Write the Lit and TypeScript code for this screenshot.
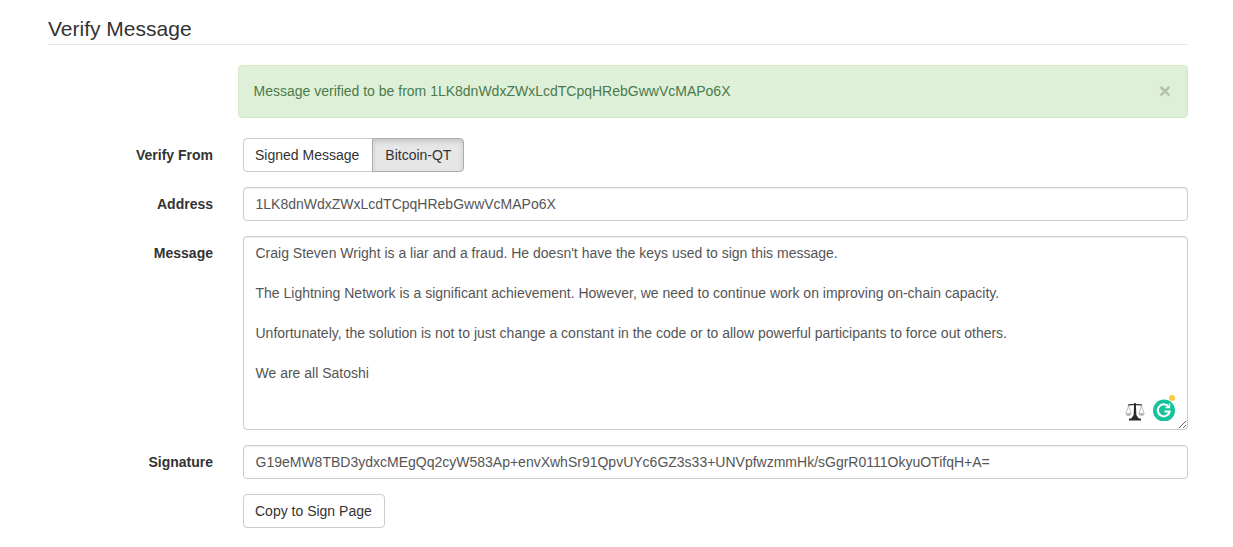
import { LitElement, html, css } from "lit";
import { customElement } from "lit/decorators.js";

const MESSAGE = `Craig Steven Wright is a liar and a fraud. He doesn't have the keys used to sign this message.

The Lightning Network is a significant achievement. However, we need to continue work on improving on-chain capacity.

Unfortunately, the solution is not to just change a constant in the code or to allow powerful participants to force out others.

We are all Satoshi`;

@customElement("app-root")
export class AppRoot extends LitElement {
  static styles = css`
    :host {
      display: block;
      width: 1233px;
      height: 547px;
      overflow: hidden;
      background: #fff;
      box-sizing: border-box;
      padding: 0 45px 0 48px;
      font-family: "Liberation Sans", Arial, sans-serif;
      font-size: 14px;
      line-height: 20px;
      color: #333;
    }
    * { box-sizing: border-box; }
    h1 {
      margin: 0 0 20px;
      height: 45px;
      padding-top: 17px;
      border-bottom: 1px solid #e5e5e5;
      font-size: 21px;
      font-weight: 400;
      line-height: 24px;
      color: #333;
    }
    .alert {
      margin: 0 0 20px 190px;
      height: 53px;
      padding: 15px 15px 15px 14.5px;
      display: flex;
      justify-content: space-between;
      background: #dff0d8;
      border: 1px solid #d6e9c6;
      border-radius: 4px;
      color: #4a7a4b;
    }
    .close {
      font-size: 21px;
      font-weight: 700;
      line-height: 20px;
      color: #000;
      opacity: 0.2;
      margin-right: 1px;
    }
    .row {
      display: grid;
      grid-template-columns: 165px 1fr;
      column-gap: 30px;
      margin-bottom: 15px;
    }
    label {
      text-align: right;
      font-weight: 700;
      padding-top: 7px;
      color: #333;
    }
    .group { display: flex; }
    .btn {
      height: 34px;
      padding: 6px 12px 6px 11px;
      border: 1px solid #ccc;
      border-radius: 4px;
      background: #fff;
      color: #333;
      font: inherit;
      white-space: nowrap;
    }
    .group .btn:first-child {
      border-radius: 4px 0 0 4px;
      padding-right: 13px;
    }
    .group .btn:last-child {
      border-radius: 0 4px 4px 0;
      margin-left: -1px;
      padding-left: 12px;
      background: #e6e6e6;
      border-color: #adadad;
      box-shadow: inset 0 3px 5px rgba(0, 0, 0, 0.125);
    }
    input, textarea {
      display: block;
      width: 100%;
      padding: 6px 12px 6px 11.5px;
      border: 1px solid #ccc;
      border-radius: 4px;
      background: #fff;
      color: #555;
      font: inherit;
      box-shadow: inset 0 1px 1px rgba(0, 0, 0, 0.075);
      outline: none;
    }
    input { height: 34px; }
    textarea { height: 194px; resize: vertical; overflow: hidden; }
    .area { position: relative; }
    .ext {
      position: absolute;
      right: 11px;
      bottom: 9px;
      display: flex;
      align-items: flex-end;
      gap: 8px;
    }
    .ext svg { display: block; }
  `;

  render() {
    return html`
      <h1>Verify Message</h1>
      <div class="alert">
        <span>Message verified to be from 1LK8dnWdxZWxLcdTCpqHRebGwwVcMAPo6X</span>
        <span class="close">×</span>
      </div>
      <div class="row">
        <label>Verify From</label>
        <div class="group">
          <button class="btn">Signed Message</button>
          <button class="btn">Bitcoin-QT</button>
        </div>
      </div>
      <div class="row">
        <label>Address</label>
        <input value="1LK8dnWdxZWxLcdTCpqHRebGwwVcMAPo6X" />
      </div>
      <div class="row">
        <label>Message</label>
        <div class="area">
          <textarea readonly .value=${MESSAGE}></textarea>
          <div class="ext">
            <svg width="20" height="20" viewBox="0 0 20 20">
              <path d="M3.500 5 1 12M3.500 5 6 12M16.500 5 14 12M16.500 5 19 12" stroke="#aaa" stroke-width=".8" fill="none"/>
              <path d="M.5 12h6a3 3 0 0 1-6 0ZM13.500 12h6a3 3 0 0 1-6 0Z" fill="#bbb"/>
              <path d="M3 4.200c2 -.9 4.500 -.2 7 -.9 2.500 .7 5 0 7 .9" stroke="#333" stroke-width="1.300" fill="none"/>
              <path d="M9.200 2h1.600l.6 12 2.400 3.500H16v2H4v-2h2.200L8.600 14Z" fill="#2a2a2a"/>
            </svg>
            <svg width="24" height="26" viewBox="0 0 24 26">
              <circle cx="11" cy="15.500" r="11" fill="#15c39a"/>
              <path d="M15.800 12a6 6 0 1 0 .9 4.500H11.500" fill="none" stroke="#fff" stroke-width="2"/>
              <path d="M16.500 8.500v4h-4" fill="none" stroke="#fff" stroke-width="1.300"/>
              <circle cx="19" cy="3" r="3" fill="#fdc83c"/>
            </svg>
          </div>
        </div>
      </div>
      <div class="row">
        <label>Signature</label>
        <input value="G19eMW8TBD3ydxcMEgQq2cyW583Ap+envXwhSr91QpvUYc6GZ3s33+UNVpfwzmmHk/sGgrR0111OkyuOTifqH+A=" />
      </div>
      <div class="row">
        <span></span>
        <div><button class="btn">Copy to Sign Page</button></div>
      </div>
    `;
  }
}
